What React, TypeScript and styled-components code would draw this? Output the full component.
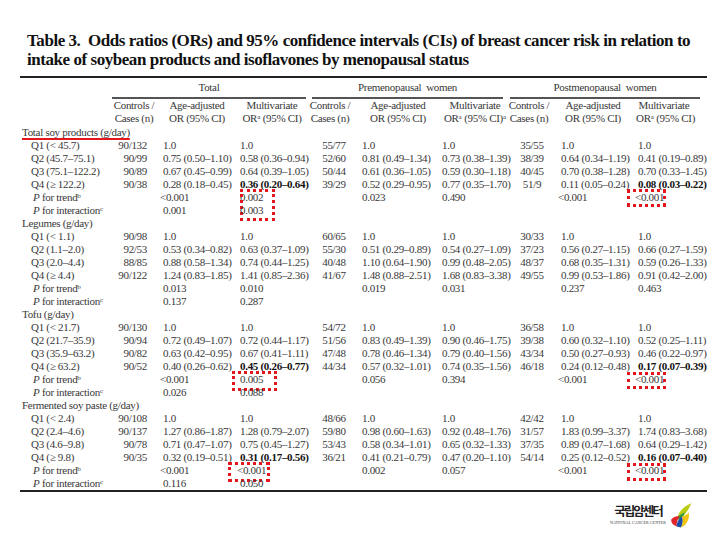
import React from 'react';
import styled, { createGlobalStyle } from 'styled-components';

// label | total (cc, age, multi) | pre (cc, age, multi) | post (cc, age, multi) | filler
const COLS = '92px 44px 82px 68px 48px 88px 66px 42px 86px 56px 15px';

type Col = { align: 'left' | 'right' | 'center'; pad: number };

const colDefs: Col[] = [
  { align: 'left', pad: 0 },
  { align: 'right', pad: 9 },
  { align: 'left', pad: 7 },
  { align: 'left', pad: 2 },
  { align: 'center', pad: 8 },
  { align: 'left', pad: 8 },
  { align: 'left', pad: 0 },
  { align: 'center', pad: 6 },
  { align: 'left', pad: 11 },
  { align: 'left', pad: 2 },
];

type Mark = { col: number; l: number; t: number; w: number; h: number };

type Group = {
  name: string;
  underline?: boolean;
  q: string[][];
  trend: string[];
  inter: string[];
  marks: Mark[];
};

const groups: Group[] = [
  {
    name: 'Total soy products (g/day)',
    underline: true,
    q: [
      ['Q1 (< 45.7)', '90/132', '1.0', '1.0', '55/77', '1.0', '1.0', '35/55', '1.0', '1.0'],
      ['Q2 (45.7–75.1)', '90/99', '0.75 (0.50–1.10)', '0.58 (0.36–0.94)', '52/60', '0.81 (0.49–1.34)', '0.73 (0.38–1.39)', '38/39', '0.64 (0.34–1.19)', '0.41 (0.19–0.89)'],
      ['Q3 (75.1–122.2)', '90/89', '0.67 (0.45–0.99)', '0.64 (0.39–1.05)', '50/44', '0.61 (0.36–1.05)', '0.59 (0.30–1.18)', '40/45', '0.70 (0.38–1.28)', '0.70 (0.33–1.45)'],
      ['Q4 (≥ 122.2)', '90/38', '0.28 (0.18–0.45)', '*0.36 (0.20–0.64)', '39/29', '0.52 (0.29–0.95)', '0.77 (0.35–1.70)', '51/9', '0.11 (0.05–0.24)', '*0.08 (0.03–0.22)'],
    ],
    trend: ['<0.001', '0.002', '0.023', '0.490', '<0.001', '<0.001'],
    inter: ['0.001', '0.003'],
    marks: [
      { col: 3, l: 2, t: -2, w: 35, h: 32 },
      { col: 9, l: -9, t: -2, w: 39, h: 18 },
    ],
  },
  {
    name: 'Legumes (g/day)',
    q: [
      ['Q1 (< 1.1)', '90/98', '1.0', '1.0', '60/65', '1.0', '1.0', '30/33', '1.0', '1.0'],
      ['Q2 (1.1–2.0)', '92/53', '0.53 (0.34–0.82)', '0.63 (0.37–1.09)', '55/30', '0.51 (0.29–0.89)', '0.54 (0.27–1.09)', '37/23', '0.56 (0.27–1.15)', '0.66 (0.27–1.59)'],
      ['Q3 (2.0–4.4)', '88/85', '0.88 (0.58–1.34)', '0.74 (0.44–1.25)', '40/48', '1.10 (0.64–1.90)', '0.99 (0.48–2.05)', '48/37', '0.68 (0.35–1.31)', '0.59 (0.26–1.33)'],
      ['Q4 (≥ 4.4)', '90/122', '1.24 (0.83–1.85)', '1.41 (0.85–2.36)', '41/67', '1.48 (0.88–2.51)', '1.68 (0.83–3.38)', '49/55', '0.99 (0.53–1.86)', '0.91 (0.42–2.00)'],
    ],
    trend: ['0.013', '0.010', '0.019', '0.031', '0.237', '0.463'],
    inter: ['0.137', '0.287'],
    marks: [],
  },
  {
    name: 'Tofu (g/day)',
    q: [
      ['Q1 (< 21.7)', '90/130', '1.0', '1.0', '54/72', '1.0', '1.0', '36/58', '1.0', '1.0'],
      ['Q2 (21.7–35.9)', '90/94', '0.72 (0.49–1.07)', '0.72 (0.44–1.17)', '51/56', '0.83 (0.49–1.39)', '0.90 (0.46–1.75)', '39/38', '0.60 (0.32–1.10)', '0.52 (0.25–1.11)'],
      ['Q3 (35.9–63.2)', '90/82', '0.63 (0.42–0.95)', '0.67 (0.41–1.11)', '47/48', '0.78 (0.46–1.34)', '0.79 (0.40–1.56)', '43/34', '0.50 (0.27–0.93)', '0.46 (0.22–0.97)'],
      ['Q4 (≥ 63.2)', '90/52', '0.40 (0.26–0.62)', '*0.45 (0.26–0.77)', '44/34', '0.57 (0.32–1.01)', '0.74 (0.35–1.56)', '46/18', '0.24 (0.12–0.48)', '*0.17 (0.07–0.39)'],
    ],
    trend: ['<0.001', '0.005', '0.056', '0.394', '<0.001', '<0.001'],
    inter: ['0.026', '0.088'],
    marks: [
      { col: 3, l: -6, t: -2, w: 45, h: 20 },
      { col: 9, l: -9, t: -1, w: 39, h: 17 },
    ],
  },
  {
    name: 'Fermented soy paste (g/day)',
    q: [
      ['Q1 (< 2.4)', '90/108', '1.0', '1.0', '48/66', '1.0', '1.0', '42/42', '1.0', '1.0'],
      ['Q2 (2.4–4.6)', '90/137', '1.27 (0.86–1.87)', '1.28 (0.79–2.07)', '59/80', '0.98 (0.60–1.63)', '0.92 (0.48–1.76)', '31/57', '1.83 (0.99–3.37)', '1.74 (0.83–3.68)'],
      ['Q3 (4.6–9.8)', '90/78', '0.71 (0.47–1.07)', '0.75 (0.45–1.27)', '53/43', '0.58 (0.34–1.01)', '0.65 (0.32–1.33)', '37/35', '0.89 (0.47–1.68)', '0.64 (0.29–1.42)'],
      ['Q4 (≥ 9.8)', '90/35', '0.32 (0.19–0.51)', '*0.31 (0.17–0.56)', '36/21', '0.41 (0.21–0.79)', '0.47 (0.20–1.10)', '54/14', '0.25 (0.12–0.52)', '*0.16 (0.07–0.40)'],
    ],
    trend: ['<0.001', '<0.001', '0.002', '0.057', '<0.001', '<0.001'],
    inter: ['0.116', '0.050'],
    marks: [
      { col: 3, l: -10, t: -2, w: 42, h: 20 },
      { col: 9, l: -9, t: -1, w: 39, h: 18 },
    ],
  },
];

const GlobalStyle = createGlobalStyle`
  html, body {
    margin: 0;
    padding: 0;
    background: #fff;
  }
  body {
    font-family: "Liberation Serif", "Times New Roman", serif;
    color: #383838;
  }
`;

const Page = styled.div`
  width: 720px;
  height: 540px;
  box-sizing: border-box;
  padding: 31px 13px 0 20px;
  display: flex;
  flex-direction: column;
  overflow: hidden;
`;

const Title = styled.h1`
  margin: 0 0 7px 7px;
  font-size: 17px;
  line-height: 19px;
  letter-spacing: -0.45px;
  font-weight: bold;
  color: #111;
  white-space: pre;
`;

const Table = styled.div`
  border-top: 2px solid #222;
  border-bottom: 2px solid #222;
  font-size: 11px;
  letter-spacing: -0.3px;
`;

const Row = styled.div`
  display: grid;
  grid-template-columns: ${COLS};
  height: 13px;
  line-height: 13px;
  white-space: nowrap;
`;

const GroupRow = styled(Row)`
  height: 20px;
  line-height: 19px;
`;

const GroupHead = styled.div<{ $span: number; $ml: number; $mr: number }>`
  grid-column: span ${(p) => p.$span};
  margin: 0 ${(p) => p.$mr}px 0 ${(p) => p.$ml}px;
  border-bottom: 2px solid #555;
  text-align: center;
  white-space: pre;
`;

const HeadRow = styled(Row)`
  height: auto;
  padding: 1px 0;
`;

const HeadCell = styled.div`
  text-align: center;
`;

const Cell = styled.div<{ $align: string; $pad: number; $bold?: boolean; $hang?: boolean }>`
  position: relative;
  text-align: ${(p) => p.$align};
  padding-${(p) => (p.$align === 'right' ? 'right' : 'left')}: ${(p) => p.$pad}px;
  text-indent: ${(p) => (p.$hang ? '-3px' : '0')};
  font-weight: ${(p) => (p.$bold ? 'bold' : 'normal')};
  color: ${(p) => (p.$bold ? '#111' : 'inherit')};
`;

const Label = styled.div<{ $indent: number }>`
  padding-left: ${(p) => p.$indent}px;
`;

const GroupName = styled.div`
  grid-column: 1 / -1;
  padding-left: 2px;
`;

const RedUnderline = styled.span`
  text-decoration: underline;
  text-decoration-color: #e3161d;
  text-decoration-thickness: 2px;
  text-underline-offset: 2px;
`;

const DottedBox = styled.div<{ $l: number; $t: number; $w: number; $h: number }>`
  position: absolute;
  left: ${(p) => p.$l}px;
  top: ${(p) => p.$t}px;
  width: ${(p) => p.$w}px;
  height: ${(p) => p.$h}px;
  box-sizing: border-box;
  border: 3px dotted #e3161d;
  pointer-events: none;
`;

const Sup = styled.sup`
  font-size: 7px;
  line-height: 0;
  vertical-align: 3px;
  letter-spacing: 0;
`;

const Footer = styled.div`
  display: flex;
  justify-content: flex-end;
  align-items: flex-start;
  gap: 4px;
  padding: 0 15px 0 0;
`;

const LogoText = styled.div`
  display: flex;
  flex-direction: column;
  align-items: center;
  padding-top: 11px;
`;

const LogoKo = styled.div`
  font-family: "Noto Sans CJK KR", "Noto Sans", sans-serif;
  font-weight: 700;
  font-size: 12.5px;
  line-height: 16px;
  letter-spacing: -2px;
  color: #222;
`;

const LogoEn = styled.div`
  font-family: "Liberation Serif", serif;
  font-size: 4px;
  line-height: 8px;
  letter-spacing: 0.1px;
  color: #333;
`;

const LeafBox = styled.div`
  margin-top: 10px;
  width: 22px;
  height: 28px;
`;

const Leaf = () => (
  <LeafBox>
    <svg width="22" height="28" viewBox="0 0 20 25">
      <path d="M7 13 C9 7 14 3 19.5 1 C17 6 15 10 11 13 Z" fill="#b9cc12" />
      <path d="M6 14 C9 11 12 10 13.5 9 C13 12 11 14 8 16 Z" fill="#2e9a3c" />
      <path d="M1 16 C3 13 6 12 9 13 C7 15 6 18 6 22 C3 21 1 19 1 16 Z" fill="#e0262b" />
      <path d="M6 22 C6 18 8 15 11 13 C12 16 12 19 10 23 Z" fill="#1d4fa8" />
      <path d="M10 23 C12 19 12 16 11 13 C14 12 16 11 17 9 C18 14 16 20 10 23 Z" fill="#f1c40f" />
    </svg>
  </LeafBox>
);

const PLabel = ({ text, sup }: { text: string; sup: string }) => (
  <>
    <i>P</i> {text}
    <Sup>{sup}</Sup>
  </>
);

function DataRow({
  label,
  cells,
  indent,
  marks = [],
}: {
  label: React.ReactNode;
  cells: string[];
  indent: number;
  marks?: Mark[];
}) {
  return (
    <Row>
      <Label $indent={indent}>{label}</Label>
      {cells.map((v, i) => {
        const col = colDefs[i + 1];
        const bold = v.startsWith('*');
        const text = bold ? v.slice(1) : v;
        const mark = marks.find((m) => m.col === i + 1);
        return (
          <Cell key={i} $align={col.align} $pad={col.pad} $bold={bold} $hang={text.startsWith('<')}>
            {text}
            {mark && <DottedBox $l={mark.l} $t={mark.t} $w={mark.w} $h={mark.h} />}
          </Cell>
        );
      })}
    </Row>
  );
}

// p-values go in the age-adjusted / multivariate columns
const spreadP = (vals: string[]) => {
  const out = Array(9).fill('');
  const slots = [1, 2, 4, 5, 7, 8];
  vals.forEach((v, i) => (out[slots[i]] = v));
  return out;
};

export default function App() {
  return (
    <>
      <GlobalStyle />
      <Page>
        <Title>
          {'Table 3.  Odds ratios (ORs) and 95% confidence intervals (CIs) of breast cancer risk in relation to\nintake of soybean products and isoflavones by menopausal status'}
        </Title>
        <Table>
          <GroupRow>
            <div />
            <GroupHead $span={3} $ml={0} $mr={0}>Total</GroupHead>
            <GroupHead $span={3} $ml={6} $mr={5}>{'Premenopausal  women'}</GroupHead>
            <GroupHead $span={4} $ml={2} $mr={7}>{'Postmenopausal  women'}</GroupHead>
          </GroupRow>
          <HeadRow>
            <div />
            {[0, 1, 2].map((g) => (
              <React.Fragment key={g}>
                <HeadCell>
                  Controls /<br />
                  Cases (n)
                </HeadCell>
                <HeadCell>
                  Age-adjusted
                  <br />
                  OR (95% CI)
                </HeadCell>
                <HeadCell>
                  Multivariate
                  <br />
                  OR<Sup>a</Sup> (95% CI){g === 1 && <Sup>a</Sup>}
                </HeadCell>
              </React.Fragment>
            ))}
          </HeadRow>
          {groups.map((g) => (
            <React.Fragment key={g.name}>
              <Row>
                <GroupName>{g.underline ? <RedUnderline>{g.name}</RedUnderline> : g.name}</GroupName>
              </Row>
              {g.q.map((r) => (
                <DataRow key={r[0]} label={r[0]} cells={r.slice(1)} indent={11} />
              ))}
              <DataRow
                label={<PLabel text="for trend" sup="b" />}
                cells={spreadP(g.trend)}
                indent={13}
                marks={g.marks}
              />
              <DataRow label={<PLabel text="for interaction" sup="c" />} cells={spreadP(g.inter)} indent={13} />
            </React.Fragment>
          ))}
        </Table>
        <Footer>
          <LogoText>
            <LogoKo>국립암센터</LogoKo>
            <LogoEn>NATIONAL CANCER CENTER</LogoEn>
          </LogoText>
          <Leaf />
        </Footer>
      </Page>
    </>
  );
}
